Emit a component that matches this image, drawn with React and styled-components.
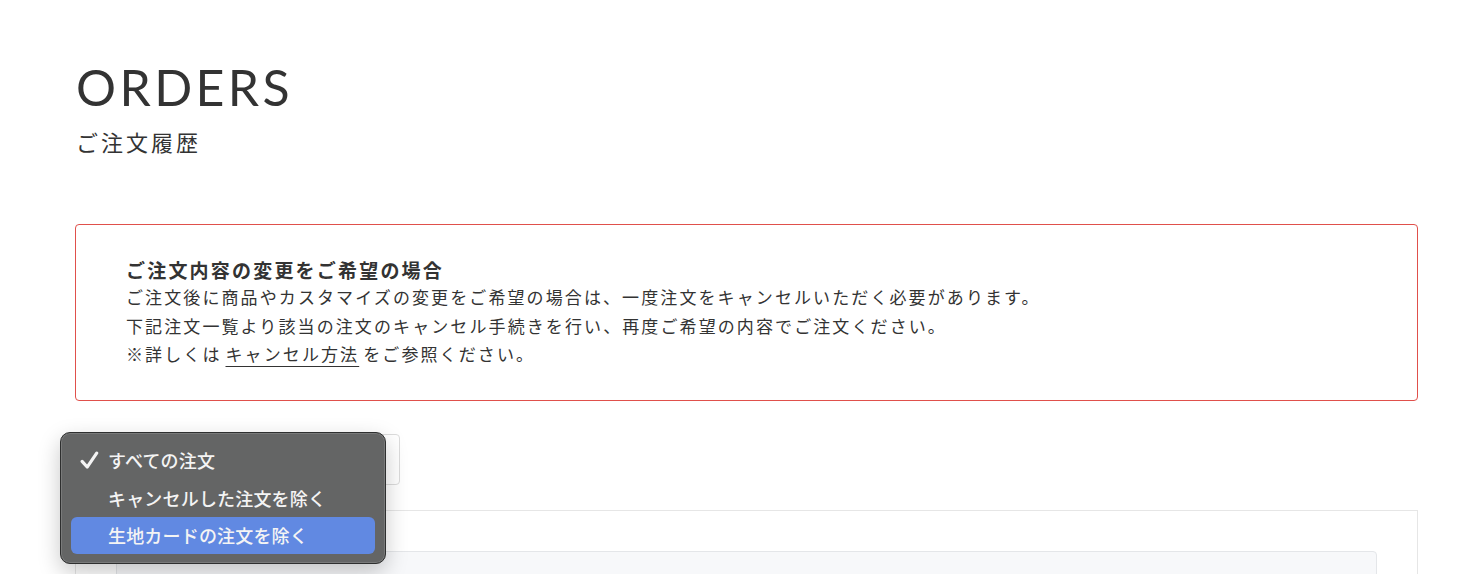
import React from 'react';
import styled, { createGlobalStyle } from 'styled-components';

const GlobalStyle = createGlobalStyle`
  body {
    margin: 0;
    background: #fff;
    color: #333;
    font-family: 'Noto Sans CJK JP', 'Noto Sans', sans-serif;
  }
`;

const StyledPage = styled.div`
  position: relative;
  padding: 57px 42px 0 75px;
  height: 574px;
  box-sizing: border-box;
  overflow: hidden;
`;

const StyledTitle = styled.h1`
  margin: 0;
  font-family: 'Lato', sans-serif;
  font-weight: 400;
  font-size: 50px;
  line-height: 60px;
  letter-spacing: 3.4px;
  color: #333;
  padding-left: 1px;
`;

const StyledSubtitle = styled.p`
  margin: 8px 0 0 1px;
  font-size: 22px;
  line-height: 33px;
  letter-spacing: 3px;
  color: #333;
`;

const StyledNotice = styled.div`
  margin-top: 66px;
  border: 1px solid #e0504b;
  border-radius: 4px;
  padding: 32px 50px 31px 50px;
  font-size: 17px;
  line-height: 28.5px;
  letter-spacing: 2.1px;
  color: #333;
`;

const StyledNoticeTitle = styled.div`
  font-size: 19px;
  font-weight: 700;
  line-height: 26px;
  letter-spacing: 2.2px;
`;

const StyledLink = styled.a`
  color: #333;
  text-decoration: underline;
  text-underline-offset: 5px;
  text-decoration-thickness: 1px;
  margin: 0 4px;
`;

const StyledFilterRow = styled.div`
  position: relative;
  margin-top: 33px;
`;

const StyledSelect = styled.div`
  width: 324px;
  height: 51px;
  margin-left: 1px;
  box-sizing: border-box;
  border: 1px solid #dcdcdc;
  border-radius: 4px;
  background: #fff;
`;

const StyledMenu = styled.ul`
  position: absolute;
  left: -15px;
  top: -2px;
  width: 326px;
  margin: 0;
  padding: 9px 10px;
  box-sizing: border-box;
  list-style: none;
  background: #646565;
  border: 1px solid #2e2f2f;
  border-radius: 10px;
  box-shadow: inset 0 0 0 1px rgba(255, 255, 255, 0.14), 0 8px 22px rgba(0, 0, 0, 0.22);
  z-index: 10;
`;

const StyledMenuItem = styled.li`
  display: flex;
  align-items: center;
  height: 37.5px;
  padding-left: 10px;
  border-radius: 6px;
  background: ${(p) => (p.$active ? '#6189e2' : 'transparent')};
  color: #f4f4f4;
  font-size: 18px;
  font-weight: 500;
  letter-spacing: 0.01em;
`;

const StyledCheck = styled.span`
  display: inline-flex;
  width: 29px;
  flex-shrink: 0;
  margin-left: -1px;
  margin-right: -1px;
`;

const StyledCard = styled.div`
  margin-top: 25px;
  border: 1px solid #e6e6e6;
  padding: 40px 40px 0 40px;
  height: 200px;
`;

const StyledInner = styled.div`
  border: 1px solid #e4e6e9;
  border-radius: 4px;
  background: #f7f8fa;
  height: 160px;
`;

const Check = () => (
  <svg width="19" height="19" viewBox="0 0 18 18">
    <path d="M2 9.8 L6.8 15.2 L15.8 2" fill="none" stroke="#f4f4f4" strokeWidth="3" strokeLinecap="round" strokeLinejoin="round" />
  </svg>
);

const options = [
  { label: 'すべての注文', checked: true },
  { label: 'キャンセルした注文を除く' },
  { label: '生地カードの注文を除く', active: true },
];

const App = () => {
  return (
    <>
      <GlobalStyle />
      <StyledPage>
        <StyledTitle>ORDERS</StyledTitle>
        <StyledSubtitle>ご注文履歴</StyledSubtitle>
        <StyledNotice>
          <StyledNoticeTitle>ご注文内容の変更をご希望の場合</StyledNoticeTitle>
          <div>ご注文後に商品やカスタマイズの変更をご希望の場合は、一度注文をキャンセルいただく必要があります。</div>
          <div>下記注文一覧より該当の注文のキャンセル手続きを行い、再度ご希望の内容でご注文ください。</div>
          <div>
            ※詳しくは<StyledLink href="#">キャンセル方法</StyledLink>をご参照ください。
          </div>
        </StyledNotice>
        <StyledFilterRow>
          <StyledSelect />
          <StyledMenu>
            {options.map((o) => (
              <StyledMenuItem key={o.label} $active={o.active}>
                <StyledCheck>{o.checked && <Check />}</StyledCheck>
                {o.label}
              </StyledMenuItem>
            ))}
          </StyledMenu>
        </StyledFilterRow>
        <StyledCard>
          <StyledInner />
        </StyledCard>
      </StyledPage>
    </>
  );
};

export default App;
